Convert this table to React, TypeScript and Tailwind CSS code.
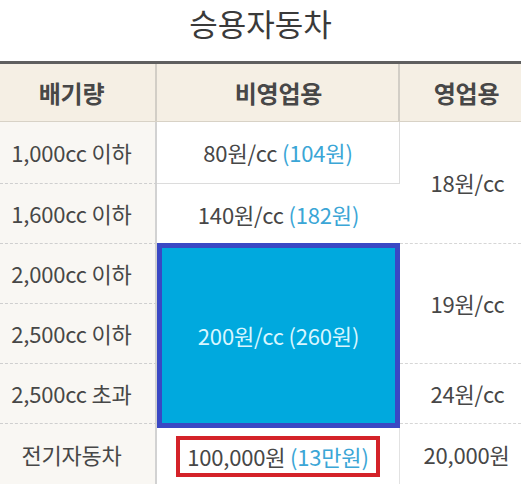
const rows = [
  { label: '1,000cc 이하' },
  { label: '1,600cc 이하' },
  { label: '2,000cc 이하' },
  { label: '2,500cc 이하' },
  { label: '2,500cc 초과' },
  { label: '전기자동차' },
]

function LabelCell({ text, last }: { text: string; last?: boolean }) {
  return (
    <div
      className={`flex items-center justify-center pr-[14px] bg-[#f9f7f3] shadow-[inset_-2px_0_0_#d2d2d2] ${
        last ? '' : 'border-b border-dashed border-[#cfcfcf]'
      }`}
    >
      {text}
    </div>
  )
}

export default function App() {
  return (
    <div
      className="w-[521px] h-[484px] overflow-hidden bg-white text-[#474747]"
      style={{ fontFamily: '"Noto Sans CJK KR", "Noto Sans", sans-serif' }}
    >
      <h1 className="h-[61px] flex items-center justify-center pb-[14px] text-[31px] text-[#3a3a3a]">승용자동차</h1>

      <div className="border-t-[3px] border-[#5f5f5f] grid grid-cols-[157px_243px_1fr] grid-rows-[58px_62px_60px_60px_60px_60px_60px] text-[22px] tracking-[-0.2px]">
        {/* header */}
        <div className="flex items-center justify-center pr-[14px] bg-[#f5efe4] border-b border-[#d8d2c6] shadow-[inset_-2px_0_0_#d2cec6] font-bold text-[24px]">
          배기량
        </div>
        <div className="flex items-center justify-center bg-[#f5efe4] border-b border-[#d8d2c6] shadow-[inset_-2px_0_0_#d2cec6] font-bold text-[24px]">
          비영업용
        </div>
        <div className="flex items-center justify-center pl-[12px] bg-[#f5efe4] border-b border-[#d8d2c6] font-bold text-[24px]">
          영업용
        </div>

        {/* row 1 */}
        <LabelCell text={rows[0].label} />
        <div className="flex items-center justify-center border-r border-b border-[#dcdcdc]">
          80원/cc&nbsp;<span className="text-[#3ba6d6]">(104원)</span>
        </div>
        <div className="row-span-2 flex items-center justify-center pl-[14px] border-b border-dashed border-[#d6d6d6]">
          18원/cc
        </div>

        {/* row 2 */}
        <LabelCell text={rows[1].label} />
        <div className="flex items-center justify-center">
          140원/cc&nbsp;<span className="text-[#3ba6d6]">(182원)</span>
        </div>

        {/* rows 3-5: highlighted */}
        <LabelCell text={rows[2].label} />
        <div className="row-span-3 relative z-10 mt-[-1px] mb-[-4px] flex items-center justify-center border-[5px] border-[#3a48c4] bg-[#00a9de] text-[#d8f6ff]">
          200원/cc (260원)
        </div>
        <div className="row-span-2 flex items-center justify-center pl-[14px] border-b border-dashed border-[#d6d6d6]">
          19원/cc
        </div>
        <LabelCell text={rows[3].label} />
        <LabelCell text={rows[4].label} />
        <div className="flex items-center justify-center pl-[14px] border-b border-dashed border-[#d6d6d6]">
          24원/cc
        </div>

        {/* row 6 */}
        <LabelCell text={rows[5].label} last />
        <div className="flex items-center justify-center pt-[4px] border-r border-[#e2e2e2]">
          <div className="flex items-center h-[41px] px-[7px] border-[4px] border-[#d42229]">
            100,000원&nbsp;<span className="text-[#3ba6d6]">(13만원)</span>
          </div>
        </div>
        <div className="flex items-center justify-center pl-[12px]">20,000원</div>
      </div>
    </div>
  )
}
